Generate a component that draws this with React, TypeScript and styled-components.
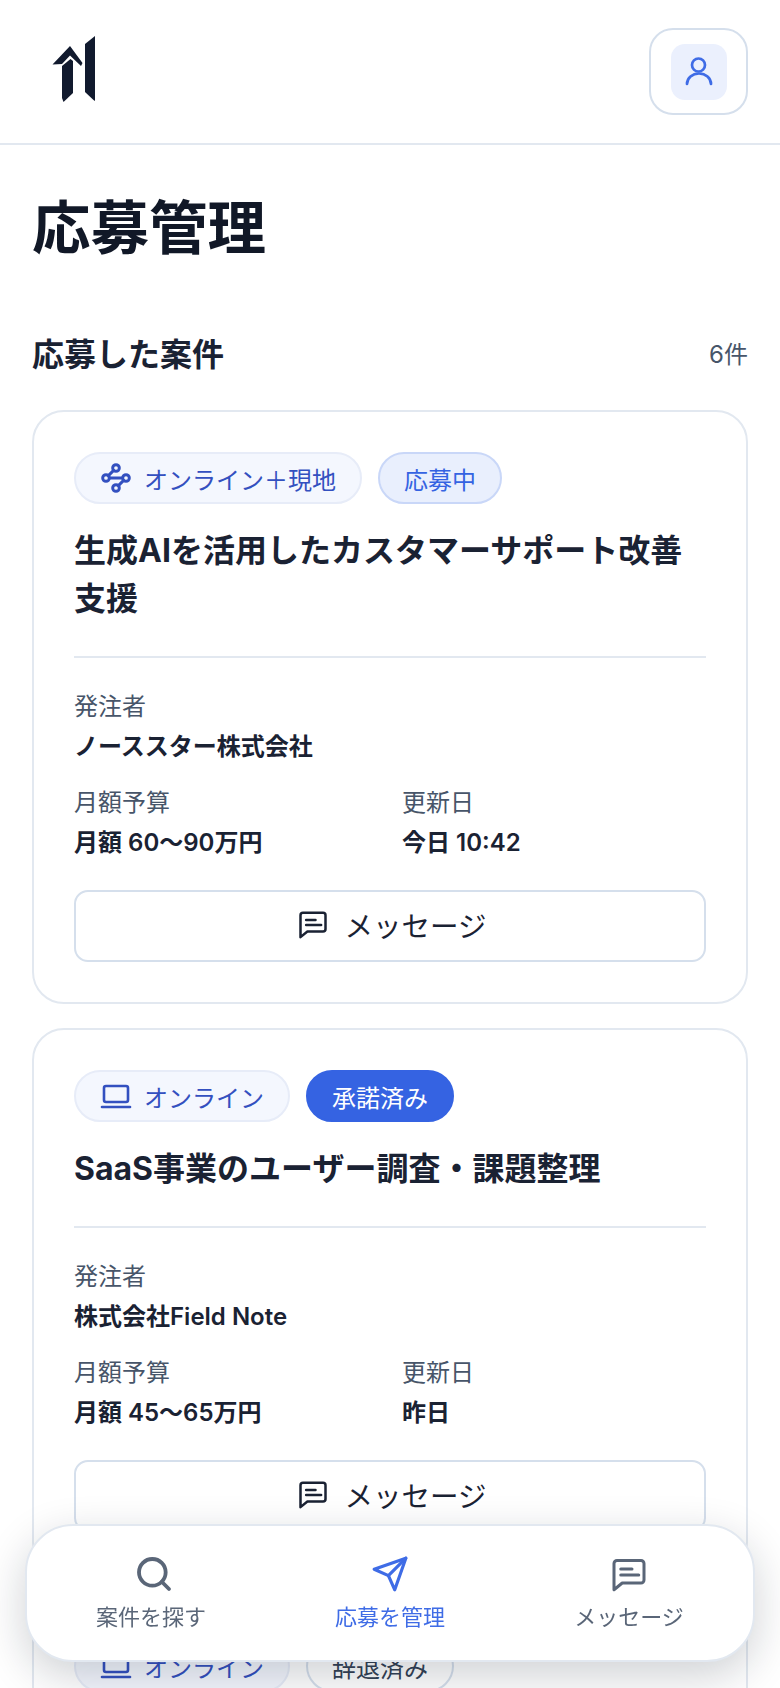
import React from "react";
import styled, { createGlobalStyle } from "styled-components";
import { Search, Waypoints } from "lucide-react";

const Global = createGlobalStyle`
  html, body { margin: 0; padding: 0; background: #fff; }
  body { font-family: Inter, "Noto Sans CJK JP", sans-serif; color: #111827; overflow: hidden; height: 1688px; }
  * { box-sizing: border-box; }
`;

const Page = styled.div`
  width: 780px;
  height: 1688px;
  overflow: hidden;
`;

const Header = styled.header`
  height: 145px;
  padding: 28px 32px 29px 50px;
  display: flex;
  align-items: flex-start;
  justify-content: space-between;
  border-bottom: 2px solid #e2e8f0;
`;

const Logo = styled.svg`
  width: 46px;
  height: 66px;
  margin-top: 8px;
`;

const ProfileButton = styled.button`
  width: 99px;
  height: 87px;
  padding: 0;
  display: flex;
  align-items: center;
  justify-content: center;
  background: #fff;
  border: 2px solid #d5dfec;
  border-radius: 24px;
`;

const ProfileIcon = styled.span`
  width: 56px;
  height: 56px;
  display: flex;
  align-items: center;
  justify-content: center;
  border-radius: 14px;
  background: #ebf0fd;
  color: #3f6ce6;
`;

const Main = styled.main`
  padding: 45px 32px 0;
`;

const Title = styled.h1`
  margin: 0;
  font-size: 58.5px;
  line-height: 76px;
  font-weight: 700;
  color: #111827;
`;

const SectionHead = styled.div`
  margin-top: 64px;
  display: flex;
  align-items: center;
  justify-content: space-between;
  height: 44px;
`;

const SectionTitle = styled.h2`
  margin: 0;
  font-size: 32px;
  font-weight: 700;
  color: #1a2233;
`;

const Count = styled.span`
  font-size: 24px;
  color: #475569;
`;

const CardList = styled.div`
  margin-top: 36px;
  display: flex;
  flex-direction: column;
  gap: 24px;
`;

const Card = styled.article`
  padding: 40px 40px 40px;
  background: #fff;
  border: 2px solid #e2e8f0;
  border-radius: 32px;
`;

const Pills = styled.div`
  display: flex;
  gap: 16px;
`;

type Tone = "mode" | "applied" | "accepted" | "declined";

const toneStyles: Record<Tone, string> = {
  mode: "background:#f4f7fe;border-color:#e7ecf8;color:#3350c0;",
  applied: "background:#e9effd;border-color:#c9d7f8;color:#3563e2;",
  accepted: "background:#3563e2;border-color:#3563e2;color:#fff;",
  declined: "background:#fff;border-color:#d5dfec;color:#334155;",
};

const Pill = styled.span<{ $tone: Tone }>`
  height: 52px;
  display: inline-flex;
  align-items: center;
  gap: 12px;
  padding: 0 24px;
  border: 2px solid;
  border-radius: 26px;
  font-size: 24px;
  ${(p) => toneStyles[p.$tone]}
`;

const JobTitle = styled.h3`
  margin: 23px 0 0;
  font-size: 32px;
  line-height: 48px;
  font-weight: 700;
  color: #1a2233;
`;

const Divider = styled.hr`
  margin: 33px 0 0;
  border: 0;
  border-top: 2px solid #e2e8f0;
`;

const Info = styled.div`
  margin-top: 29px;
  display: grid;
  grid-template-columns: 328px 1fr;
  row-gap: 16px;
`;

const Field = styled.div<{ $wide?: boolean }>`
  grid-column: ${(p) => (p.$wide ? "1 / -1" : "auto")};
`;

const Label = styled.div`
  font-size: 24px;
  line-height: 40px;
  color: #475569;
`;

const Value = styled.div`
  font-size: 24px;
  line-height: 40px;
  font-weight: 600;
  color: #1a2233;
`;

const MessageButton = styled.button`
  margin-top: 27px;
  width: 100%;
  height: 72px;
  display: flex;
  align-items: center;
  justify-content: center;
  gap: 17px;
  padding: 0 0 4px 4px;
  background: #fff;
  border: 2px solid #d5dfec;
  border-radius: 14px;
  font: inherit;
  font-size: 28.5px;
  color: #1a2233;
`;

const NavBar = styled.nav`
  position: fixed;
  left: 25px;
  top: 1524px;
  width: 730px;
  height: 138px;
  display: grid;
  grid-template-columns: repeat(3, 239px);
  justify-content: center;
  padding-top: 28px;
  background: #fff;
  border: 2px solid #e2e8f0;
  border-radius: 48px;
  box-shadow: 0 14px 44px rgba(15, 23, 42, 0.2);
`;

const NavItem = styled.a<{ $active?: boolean }>`
  display: flex;
  flex-direction: column;
  align-items: center;
  gap: 7px;
  font-size: 22px;
  line-height: 32px;
  color: ${(p) => (p.$active ? "#3f6ce6" : "#5a6678")};
`;

const NavIcon = styled.span`
  height: 40px;
  display: flex;
  align-items: center;
  justify-content: center;
  color: inherit;
`;

const SearchSlot = styled(NavIcon)`
  padding-left: 5px;
`;

const MessageIcon = ({ size }: { size: number }) => (
  <svg width={size} height={size} viewBox="0 0 24 24" fill="none" stroke="currentColor" strokeWidth={2} strokeLinecap="round" strokeLinejoin="round" aria-hidden="true">
    <path d="M22 16a2 2 0 0 1-2 2H7.5L2 22.5V5a2 2 0 0 1 2-2h16a2 2 0 0 1 2 2z" />
    <path d="M6.5 8.7h7.5" />
    <path d="M6.5 12.7h12" />
  </svg>
);

const PlaneIcon = () => (
  <svg width="38" height="38" viewBox="0 0 24 24" fill="none" stroke="currentColor" strokeWidth={2} strokeLinecap="round" strokeLinejoin="round" aria-hidden="true">
    <path d="m22 2-7 20-4-9-9-4Z" />
    <path d="M22 2 11 13" />
  </svg>
);

const PersonIcon = () => (
  <svg width="36" height="36" viewBox="0 0 36 36" fill="none" stroke="currentColor" strokeWidth={2.7} strokeLinecap="round" aria-hidden="true">
    <circle cx="17.5" cy="11" r="6.5" />
    <path d="M6 30a12 10.5 0 0 1 24 0" />
  </svg>
);

const LaptopIcon = () => (
  <svg width="32" height="26" viewBox="0 0 32 26" fill="none" stroke="currentColor" strokeWidth="2.6" strokeLinecap="round" strokeLinejoin="round" aria-hidden="true">
    <rect x="4" y="3" width="24" height="16" rx="2" />
    <path d="M2 24h28" />
  </svg>
);

type Job = {
  mode: string;
  modeIcon: React.ReactNode;
  status: string;
  tone: Tone;
  title: string;
  client: string;
  budget: string;
  updated: string;
};

const jobs: Job[] = [
  {
    mode: "オンライン＋現地",
    modeIcon: <Waypoints size={32} strokeWidth={2.2} />,
    status: "応募中",
    tone: "applied",
    title: "生成AIを活用したカスタマーサポート改善支援",
    client: "ノーススター株式会社",
    budget: "月額 60〜90万円",
    updated: "今日 10:42",
  },
  {
    mode: "オンライン",
    modeIcon: <LaptopIcon />,
    status: "承諾済み",
    tone: "accepted",
    title: "SaaS事業のユーザー調査・課題整理",
    client: "株式会社Field Note",
    budget: "月額 45〜65万円",
    updated: "昨日",
  },
];

const JobCard = ({ job }: { job: Job }) => (
  <Card>
    <Pills>
      <Pill $tone="mode">
        {job.modeIcon}
        {job.mode}
      </Pill>
      <Pill $tone={job.tone}>{job.status}</Pill>
    </Pills>
    <JobTitle>{job.title}</JobTitle>
    <Divider />
    <Info>
      <Field $wide>
        <Label>発注者</Label>
        <Value>{job.client}</Value>
      </Field>
      <Field>
        <Label>月額予算</Label>
        <Value>{job.budget}</Value>
      </Field>
      <Field>
        <Label>更新日</Label>
        <Value>{job.updated}</Value>
      </Field>
    </Info>
    <MessageButton>
      <MessageIcon size={30} />
      メッセージ
    </MessageButton>
  </Card>
);

export default function App() {
  return (
    <Page>
      <Global />
      <Header>
        <Logo viewBox="0 0 46 66" aria-label="logo">
          <path fill="#111a2e" d="M20 10 L2.5 28.5 L12 28 L20 19.5 L31 30 L32.5 27 Z" />
          <path fill="#111a2e" d="M12 30 L20.5 23 L23 25 V57 L13.5 66 L12 62 Z" />
          <path fill="#111a2e" d="M35 8 L45 0 V65 L43.5 64 L35 56 Z" />
        </Logo>
        <ProfileButton aria-label="profile">
          <ProfileIcon>
            <PersonIcon />
          </ProfileIcon>
        </ProfileButton>
      </Header>
      <Main>
        <Title>応募管理</Title>
        <SectionHead>
          <SectionTitle>応募した案件</SectionTitle>
          <Count>6件</Count>
        </SectionHead>
        <CardList>
          {jobs.map((job) => (
            <JobCard key={job.title} job={job} />
          ))}
          <Card>
            <Pills>
              <Pill $tone="mode">
                <LaptopIcon />
                オンライン
              </Pill>
              <Pill $tone="declined">辞退済み</Pill>
            </Pills>
          </Card>
        </CardList>
      </Main>
      <NavBar>
        <NavItem>
          <SearchSlot>
            <Search size={40} strokeWidth={2.3} />
          </SearchSlot>
          案件を探す
        </NavItem>
        <NavItem $active>
          <NavIcon>
            <PlaneIcon />
          </NavIcon>
          応募を管理
        </NavItem>
        <NavItem>
          <NavIcon>
            <MessageIcon size={36} />
          </NavIcon>
          メッセージ
        </NavItem>
      </NavBar>
    </Page>
  );
}
